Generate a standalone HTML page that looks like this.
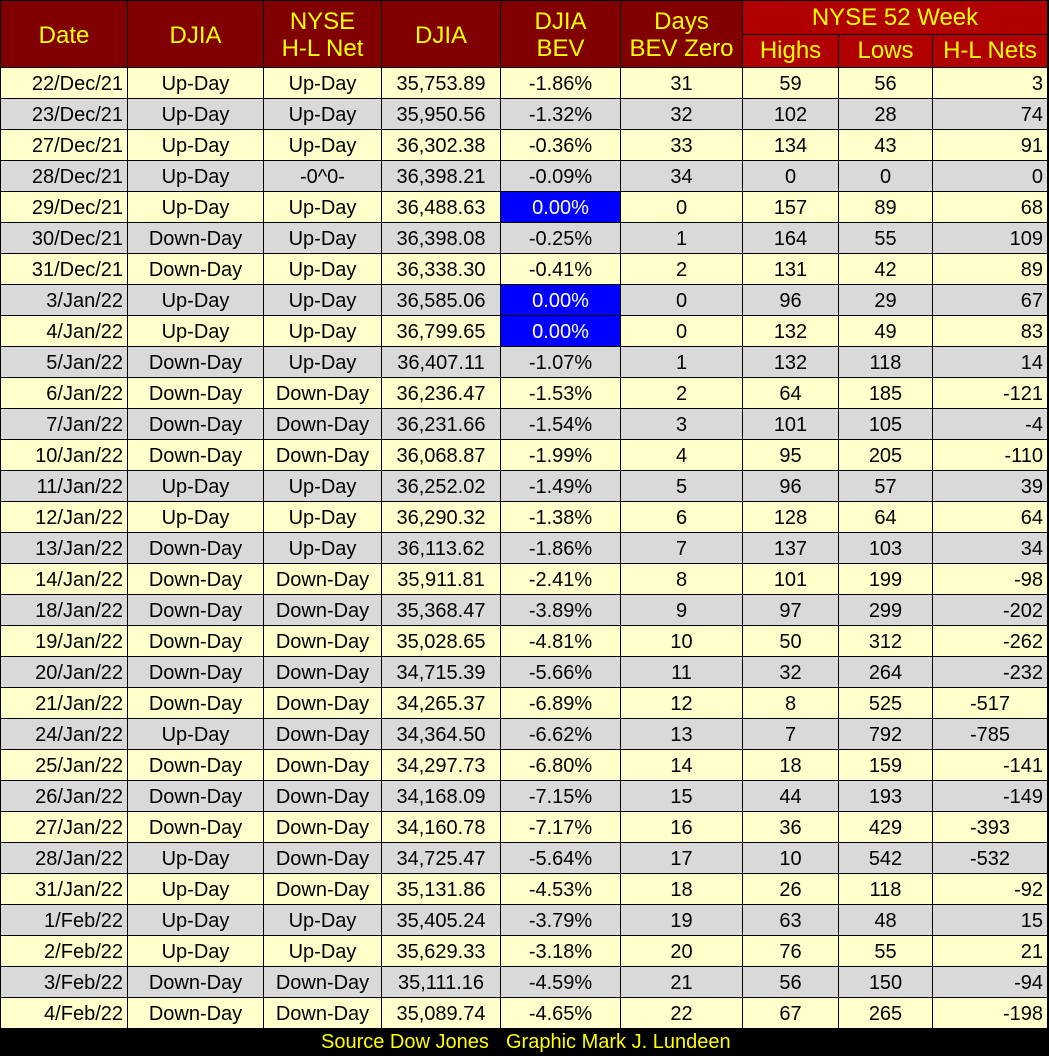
<!DOCTYPE html>
<html><head><meta charset="utf-8"><style>
body{margin:0;background:#000;width:1049px;height:1056px;overflow:hidden}
table{position:absolute;left:0;top:0;border-collapse:collapse;table-layout:fixed;font-family:"Liberation Sans",sans-serif}
td{border:1px solid #000;padding:3px 0 0 0;height:27px;font-size:20px;text-align:center;color:#000;white-space:nowrap;overflow:hidden;line-height:27px}
tr.y td{background:#ffffcc}
tr.g td{background:#d9d9d9}
td.r{text-align:right;padding-right:4px}
td.b{background:#0000ff!important;color:#fff}
.h td{color:#ffff00;font-size:24px;line-height:27px;height:32px;padding:0}
.h td.m{background:#800000;padding-top:2px}
.h td.n{background:#b00000}
#f{position:absolute;left:0;top:1028px;width:1049px;height:28px;background:#000;color:#ffff00;font:20px "Liberation Sans",sans-serif;line-height:28px}
</style></head><body>
<table>
<colgroup><col style="width:127px"><col style="width:136px"><col style="width:118px"><col style="width:119px"><col style="width:120px"><col style="width:122px"><col style="width:96px"><col style="width:94px"><col style="width:115px"></colgroup>
<tr class="h"><td class="m" rowspan="2" style="height:64px">Date</td><td class="m" rowspan="2">DJIA</td><td class="m" rowspan="2">NYSE<br>H-L Net</td><td class="m" rowspan="2">DJIA</td><td class="m" rowspan="2">DJIA<br>BEV</td><td class="m" rowspan="2">Days<br>BEV Zero</td><td class="n" colspan="3">NYSE 52 Week</td></tr>
<tr class="h"><td class="n">Highs</td><td class="n">Lows</td><td class="n">H-L Nets</td></tr>
<tr class="y"><td class="r">22/Dec/21</td><td>Up-Day</td><td>Up-Day</td><td>35,753.89</td><td>-1.86%</td><td>31</td><td>59</td><td>56</td><td class="r">3</td></tr>
<tr class="g"><td class="r">23/Dec/21</td><td>Up-Day</td><td>Up-Day</td><td>35,950.56</td><td>-1.32%</td><td>32</td><td>102</td><td>28</td><td class="r">74</td></tr>
<tr class="y"><td class="r">27/Dec/21</td><td>Up-Day</td><td>Up-Day</td><td>36,302.38</td><td>-0.36%</td><td>33</td><td>134</td><td>43</td><td class="r">91</td></tr>
<tr class="g"><td class="r">28/Dec/21</td><td>Up-Day</td><td>-0^0-</td><td>36,398.21</td><td>-0.09%</td><td>34</td><td>0</td><td>0</td><td class="r">0</td></tr>
<tr class="y"><td class="r">29/Dec/21</td><td>Up-Day</td><td>Up-Day</td><td>36,488.63</td><td class="b">0.00%</td><td>0</td><td>157</td><td>89</td><td class="r">68</td></tr>
<tr class="g"><td class="r">30/Dec/21</td><td>Down-Day</td><td>Up-Day</td><td>36,398.08</td><td>-0.25%</td><td>1</td><td>164</td><td>55</td><td class="r">109</td></tr>
<tr class="y"><td class="r">31/Dec/21</td><td>Down-Day</td><td>Up-Day</td><td>36,338.30</td><td>-0.41%</td><td>2</td><td>131</td><td>42</td><td class="r">89</td></tr>
<tr class="g"><td class="r">3/Jan/22</td><td>Up-Day</td><td>Up-Day</td><td>36,585.06</td><td class="b">0.00%</td><td>0</td><td>96</td><td>29</td><td class="r">67</td></tr>
<tr class="y"><td class="r">4/Jan/22</td><td>Up-Day</td><td>Up-Day</td><td>36,799.65</td><td class="b">0.00%</td><td>0</td><td>132</td><td>49</td><td class="r">83</td></tr>
<tr class="g"><td class="r">5/Jan/22</td><td>Down-Day</td><td>Up-Day</td><td>36,407.11</td><td>-1.07%</td><td>1</td><td>132</td><td>118</td><td class="r">14</td></tr>
<tr class="y"><td class="r">6/Jan/22</td><td>Down-Day</td><td>Down-Day</td><td>36,236.47</td><td>-1.53%</td><td>2</td><td>64</td><td>185</td><td class="r">-121</td></tr>
<tr class="g"><td class="r">7/Jan/22</td><td>Down-Day</td><td>Down-Day</td><td>36,231.66</td><td>-1.54%</td><td>3</td><td>101</td><td>105</td><td class="r">-4</td></tr>
<tr class="y"><td class="r">10/Jan/22</td><td>Down-Day</td><td>Down-Day</td><td>36,068.87</td><td>-1.99%</td><td>4</td><td>95</td><td>205</td><td class="r">-110</td></tr>
<tr class="g"><td class="r">11/Jan/22</td><td>Up-Day</td><td>Up-Day</td><td>36,252.02</td><td>-1.49%</td><td>5</td><td>96</td><td>57</td><td class="r">39</td></tr>
<tr class="y"><td class="r">12/Jan/22</td><td>Up-Day</td><td>Up-Day</td><td>36,290.32</td><td>-1.38%</td><td>6</td><td>128</td><td>64</td><td class="r">64</td></tr>
<tr class="g"><td class="r">13/Jan/22</td><td>Down-Day</td><td>Up-Day</td><td>36,113.62</td><td>-1.86%</td><td>7</td><td>137</td><td>103</td><td class="r">34</td></tr>
<tr class="y"><td class="r">14/Jan/22</td><td>Down-Day</td><td>Down-Day</td><td>35,911.81</td><td>-2.41%</td><td>8</td><td>101</td><td>199</td><td class="r">-98</td></tr>
<tr class="g"><td class="r">18/Jan/22</td><td>Down-Day</td><td>Down-Day</td><td>35,368.47</td><td>-3.89%</td><td>9</td><td>97</td><td>299</td><td class="r">-202</td></tr>
<tr class="y"><td class="r">19/Jan/22</td><td>Down-Day</td><td>Down-Day</td><td>35,028.65</td><td>-4.81%</td><td>10</td><td>50</td><td>312</td><td class="r">-262</td></tr>
<tr class="g"><td class="r">20/Jan/22</td><td>Down-Day</td><td>Down-Day</td><td>34,715.39</td><td>-5.66%</td><td>11</td><td>32</td><td>264</td><td class="r">-232</td></tr>
<tr class="y"><td class="r">21/Jan/22</td><td>Down-Day</td><td>Down-Day</td><td>34,265.37</td><td>-6.89%</td><td>12</td><td>8</td><td>525</td><td>-517</td></tr>
<tr class="g"><td class="r">24/Jan/22</td><td>Up-Day</td><td>Down-Day</td><td>34,364.50</td><td>-6.62%</td><td>13</td><td>7</td><td>792</td><td>-785</td></tr>
<tr class="y"><td class="r">25/Jan/22</td><td>Down-Day</td><td>Down-Day</td><td>34,297.73</td><td>-6.80%</td><td>14</td><td>18</td><td>159</td><td class="r">-141</td></tr>
<tr class="g"><td class="r">26/Jan/22</td><td>Down-Day</td><td>Down-Day</td><td>34,168.09</td><td>-7.15%</td><td>15</td><td>44</td><td>193</td><td class="r">-149</td></tr>
<tr class="y"><td class="r">27/Jan/22</td><td>Down-Day</td><td>Down-Day</td><td>34,160.78</td><td>-7.17%</td><td>16</td><td>36</td><td>429</td><td>-393</td></tr>
<tr class="g"><td class="r">28/Jan/22</td><td>Up-Day</td><td>Down-Day</td><td>34,725.47</td><td>-5.64%</td><td>17</td><td>10</td><td>542</td><td>-532</td></tr>
<tr class="y"><td class="r">31/Jan/22</td><td>Up-Day</td><td>Down-Day</td><td>35,131.86</td><td>-4.53%</td><td>18</td><td>26</td><td>118</td><td class="r">-92</td></tr>
<tr class="g"><td class="r">1/Feb/22</td><td>Up-Day</td><td>Up-Day</td><td>35,405.24</td><td>-3.79%</td><td>19</td><td>63</td><td>48</td><td class="r">15</td></tr>
<tr class="y"><td class="r">2/Feb/22</td><td>Up-Day</td><td>Up-Day</td><td>35,629.33</td><td>-3.18%</td><td>20</td><td>76</td><td>55</td><td class="r">21</td></tr>
<tr class="g"><td class="r">3/Feb/22</td><td>Down-Day</td><td>Down-Day</td><td>35,111.16</td><td>-4.59%</td><td>21</td><td>56</td><td>150</td><td class="r">-94</td></tr>
<tr class="y"><td class="r">4/Feb/22</td><td>Down-Day</td><td>Down-Day</td><td>35,089.74</td><td>-4.65%</td><td>22</td><td>67</td><td>265</td><td class="r">-198</td></tr>
</table>
<div id="f"><span style="position:absolute;left:321px">Source Dow Jones</span><span style="position:absolute;left:506px">Graphic Mark J. Lundeen</span></div>
</body></html>
